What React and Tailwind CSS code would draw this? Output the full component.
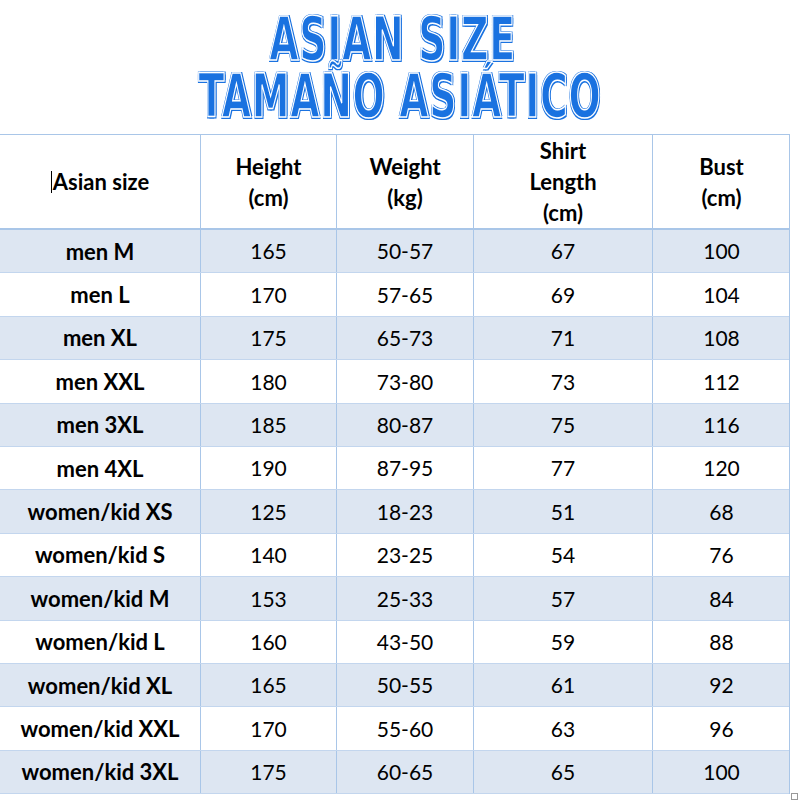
import React from 'react';

const rows = [
  ['men M', '165', '50-57', '67', '100'],
  ['men L', '170', '57-65', '69', '104'],
  ['men XL', '175', '65-73', '71', '108'],
  ['men XXL', '180', '73-80', '73', '112'],
  ['men 3XL', '185', '80-87', '75', '116'],
  ['men 4XL', '190', '87-95', '77', '120'],
  ['women/kid XS', '125', '18-23', '51', '68'],
  ['women/kid S', '140', '23-25', '54', '76'],
  ['women/kid M', '153', '25-33', '57', '84'],
  ['women/kid L', '160', '43-50', '59', '88'],
  ['women/kid XL', '165', '50-55', '61', '92'],
  ['women/kid XXL', '170', '55-60', '63', '96'],
  ['women/kid 3XL', '175', '60-65', '65', '100'],
];

// blue title with a white inline, drawn with stroke + shadows
const titleClass =
  "block text-[#1a72e0] font-bold uppercase leading-[52px] tracking-[1px] [-webkit-text-stroke:1.5px_white] [text-shadow:2px_2px_0_#1a72e0,-1px_-1px_0_#1a72e0,2px_-1px_0_#1a72e0,-1px_2px_0_#1a72e0,1px_0_0_#1a72e0,0_1px_0_#1a72e0]";

const cols = 'grid grid-cols-[201px_136px_137px_179px_137px]';

const App = () => {
  return (
    <div className="relative w-[800px] h-[800px] bg-white overflow-hidden font-['Lato','Open_Sans',sans-serif] text-black">
      {/* Titel */}
      <div className="h-[134px] flex flex-col items-center pt-[13px] font-['Liberation_Sans_Narrow','DejaVu_Sans_Condensed',sans-serif]">
        <span className={`${titleClass} text-[61px] scale-x-[0.69] mr-[14px]`}>Asian Size</span>
        <span className={`${titleClass} text-[61px] scale-x-[0.69] mt-[5px]`}>Tamaño Asiático</span>
      </div>

      {/* Tabel */}
      <div className="w-[790px] border-t border-r border-[#a9c6e8]">
        <div className={`${cols} h-[95px] border-b-2 border-[#a9c6e8] font-bold text-[22px] leading-[31px]`}>
          <div className="flex items-center justify-center border-r border-[#a9c6e8]">
            <span className="w-px h-[22px] bg-black mr-[1px]" />
            Asian size
          </div>
          <div className="flex items-center justify-center text-center border-r border-[#a9c6e8]">
            Height<br />(cm)
          </div>
          <div className="flex items-center justify-center text-center border-r border-[#a9c6e8]">
            Weight<br />(kg)
          </div>
          <div className="flex items-center justify-center text-center border-r border-[#a9c6e8]">
            Shirt<br />Length<br />(cm)
          </div>
          <div className="flex items-center justify-center text-center">
            Bust<br />(cm)
          </div>
        </div>

        {rows.map((r, i) => (
          <div
            key={r[0]}
            className={`${cols} h-[43.4px] text-[21px] border-b border-[#c3d6ee] ${i % 2 === 0 ? 'bg-[#dde6f2]' : 'bg-white'}`}
          >
            {r.map((c, j) => (
              <div
                key={j}
                className={`flex items-center justify-center ${j === 0 ? 'font-bold text-[22px]' : ''} ${j < 4 ? 'border-r border-[#a9c6e8]' : ''}`}
              >
                {c}
              </div>
            ))}
          </div>
        ))}
      </div>
      <div className="absolute left-[791px] top-[793px] w-[7px] h-[7px] border border-[#999] bg-white" />
    </div>
  );
};

export default App;
